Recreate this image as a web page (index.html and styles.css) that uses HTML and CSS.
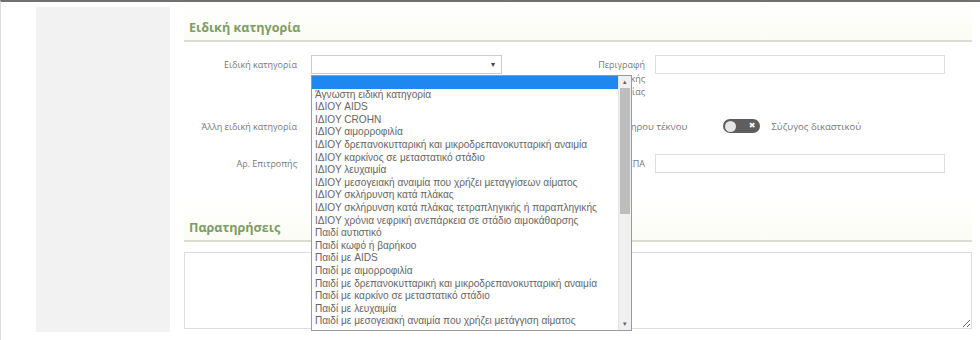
FILE: index.html
```html
<!DOCTYPE html>
<html lang="el">
<head>
    <meta charset="UTF-8">
    <meta name="viewport" content="width=device-width, initial-scale=1.0">
    <title>Ειδική κατηγορία</title>
    <link rel="stylesheet" href="styles.css">
</head>
<body>
    <div class="frame">
        <div class="layout">
            <div class="sidebar"></div>

            <div class="main">
                <div class="section">
                    <h2 class="section-title">Ειδική κατηγορία</h2>

                    <div class="form-grid">
                        <label class="label">Ειδική κατηγορία</label>
                        <div class="field">
                            <div class="select">
                                <span class="select-arrow">&#9662;</span>
                            </div>
                            <div class="dropdown">
                                <ul class="options">
                                    <li class="selected">&nbsp;</li>
                                    <li>Άγνωστη ειδική κατηγορία</li>
                                    <li>ΙΔΙΟΥ AIDS</li>
                                    <li>ΙΔΙΟΥ CROHN</li>
                                    <li>ΙΔΙΟΥ αιμορροφιλία</li>
                                    <li>ΙΔΙΟΥ δρεπανοκυτταρική και μικροδρεπανοκυτταρική αναιμία</li>
                                    <li>ΙΔΙΟΥ καρκίνος σε μεταστατικό στάδιο</li>
                                    <li>ΙΔΙΟΥ λευχαιμία</li>
                                    <li>ΙΔΙΟΥ μεσογειακή αναιμία που χρήζει μεταγγίσεων αίματος</li>
                                    <li>ΙΔΙΟΥ σκλήρυνση κατά πλάκας</li>
                                    <li>ΙΔΙΟΥ σκλήρυνση κατά πλάκας τετραπληγικής ή παραπληγικής</li>
                                    <li>ΙΔΙΟΥ χρόνια νεφρική ανεπάρκεια σε στάδιο αιμοκάθαρσης</li>
                                    <li>Παιδί αυτιστικό</li>
                                    <li>Παιδί κωφό ή βαρήκοο</li>
                                    <li>Παιδί με AIDS</li>
                                    <li>Παιδί με αιμορροφιλία</li>
                                    <li>Παιδί με δρεπανοκυτταρική και μικροδρεπανοκυτταρική αναιμία</li>
                                    <li>Παιδί με καρκίνο σε μεταστατικό στάδιο</li>
                                    <li>Παιδί με λευχαιμία</li>
                                    <li>Παιδί με μεσογειακή αναιμία που χρήζει μετάγγιση αίματος</li>
                                </ul>
                                <div class="scrollbar">
                                    <span class="scroll-btn">&#9652;</span>
                                    <div class="scroll-track">
                                        <div class="scroll-thumb"></div>
                                    </div>
                                    <span class="scroll-btn">&#9662;</span>
                                </div>
                            </div>
                        </div>
                        <label class="label label-right">Περιγραφή<br>ειδικής<br>κατηγορίας</label>
                        <input type="text" class="input">

                        <label class="label">Άλλη ειδική κατηγορία</label>
                        <input type="text" class="input">
                        <div class="toggles">
                            <div class="toggle-item">
                                <span class="toggle"><span class="knob"></span><span class="toggle-x">&#10006;</span></span>
                                <span class="toggle-label">Γονέας ανάπηρου τέκνου</span>
                            </div>
                            <div class="toggle-item">
                                <span class="toggle"><span class="knob"></span><span class="toggle-x">&#10006;</span></span>
                                <span class="toggle-label">Σύζυγος δικαστικού</span>
                            </div>
                        </div>

                        <label class="label">Αρ. Επιτροπής</label>
                        <input type="text" class="input">
                        <label class="label label-right">Αρ. απόφασης ΚΕΠΑ</label>
                        <input type="text" class="input">
                    </div>
                </div>

                <div class="section section-notes">
                    <h2 class="section-title">Παρατηρήσεις</h2>
                    <textarea class="notes"></textarea>
                </div>
            </div>
        </div>
    </div>
</body>
</html>
```

FILE: styles.css
```css
body {
    margin: 0;
    padding: 0;
    background-color: white;
    font-family: "Open Sans", Arial, sans-serif;
}

.frame {
    height: 338px;
    border-top: 2px solid #707070;
    border-left: 1px solid #dcdcdc;
    overflow: hidden;
}

.layout {
    display: flex;
    padding-left: 35px;
}

.sidebar {
    width: 134px;
    height: 325px;
    margin-top: 5px;
    background-color: #f2f2f2;
}

.main {
    width: 788px;
    margin-left: 14px;
}

.section-title {
    margin: 0;
    padding: 17px 5px 3px;
    font-size: 12.6px;
    line-height: 18px;
    font-weight: 700;
    color: #7f9c63;
    border-bottom: 2px solid #dadcd2;
    background: linear-gradient(to bottom, #ffffff, #fbfcf4);
}

.form-grid {
    display: grid;
    grid-template-columns: 127px 191px 153px 290px;
    row-gap: 18px;
    align-items: start;
    margin-top: 13px;
}

.label {
    padding: 3px 14px 0 0;
    font-size: 9px;
    line-height: 13.5px;
    color: #777;
    text-align: right;
}

.label-right {
    padding-right: 10px;
}

.input {
    height: 19px;
    box-sizing: border-box;
    margin: 0;
    border: 1px solid #dddddd;
    background-color: white;
}

.field {
    position: relative;
}

.select {
    height: 19px;
    box-sizing: border-box;
    border: 1px solid #cccccc;
    background-color: white;
    position: relative;
}

.select-arrow {
    position: absolute;
    right: 6px;
    top: 2px;
    font-size: 8px;
    color: #444;
}

.dropdown {
    position: absolute;
    top: 20px;
    left: 0;
    width: 321px;
    height: 256px;
    box-sizing: border-box;
    border: 1px solid #9a9a9a;
    background-color: white;
    display: flex;
    z-index: 10;
}

.options {
    list-style: none;
    margin: 0;
    padding: 0;
    flex: 1;
    font-family: "Liberation Sans", Arial, sans-serif;
    font-size: 10.1px;
    color: #666;
}

.options li {
    height: 12.6px;
    line-height: 12.6px;
    padding-left: 3px;
    white-space: nowrap;
}

.options li.selected {
    background-color: #1e88f0;
}

.scrollbar {
    width: 12px;
    display: flex;
    flex-direction: column;
    background-color: #f0f0f0;
    border-left: 1px solid #e4e4e4;
}

.scroll-btn {
    height: 12px;
    font-size: 7px;
    line-height: 12px;
    text-align: center;
    color: #666;
}

.scroll-track {
    flex: 1;
}

.scroll-thumb {
    height: 126px;
    margin: 0 1px;
    background-color: #bdbdbd;
}

.toggles {
    grid-column: 3 / 5;
    display: flex;
    gap: 36px;
    padding-left: 24px;
    height: 19px;
    align-items: center;
}

.toggle-item {
    display: flex;
    align-items: center;
    gap: 11px;
}

.toggle {
    width: 37px;
    height: 14px;
    border-radius: 7px;
    background-color: #5e5e5e;
    display: flex;
    align-items: center;
    justify-content: space-between;
    padding: 0 5px 0 2px;
    box-sizing: border-box;
}

.knob {
    width: 11px;
    height: 11px;
    border-radius: 50%;
    background-color: #e6e6e6;
}

.toggle-x {
    font-size: 8px;
    line-height: 1;
    color: white;
    font-family: "DejaVu Sans", sans-serif;
}

.toggle-label {
    font-size: 9.6px;
    color: #777;
}

.section-notes {
    margin-top: 29px;
}

.notes {
    display: block;
    width: 788px;
    height: 77px;
    box-sizing: border-box;
    margin-top: 10px;
    border: 1px solid #dddddd;
}
```
